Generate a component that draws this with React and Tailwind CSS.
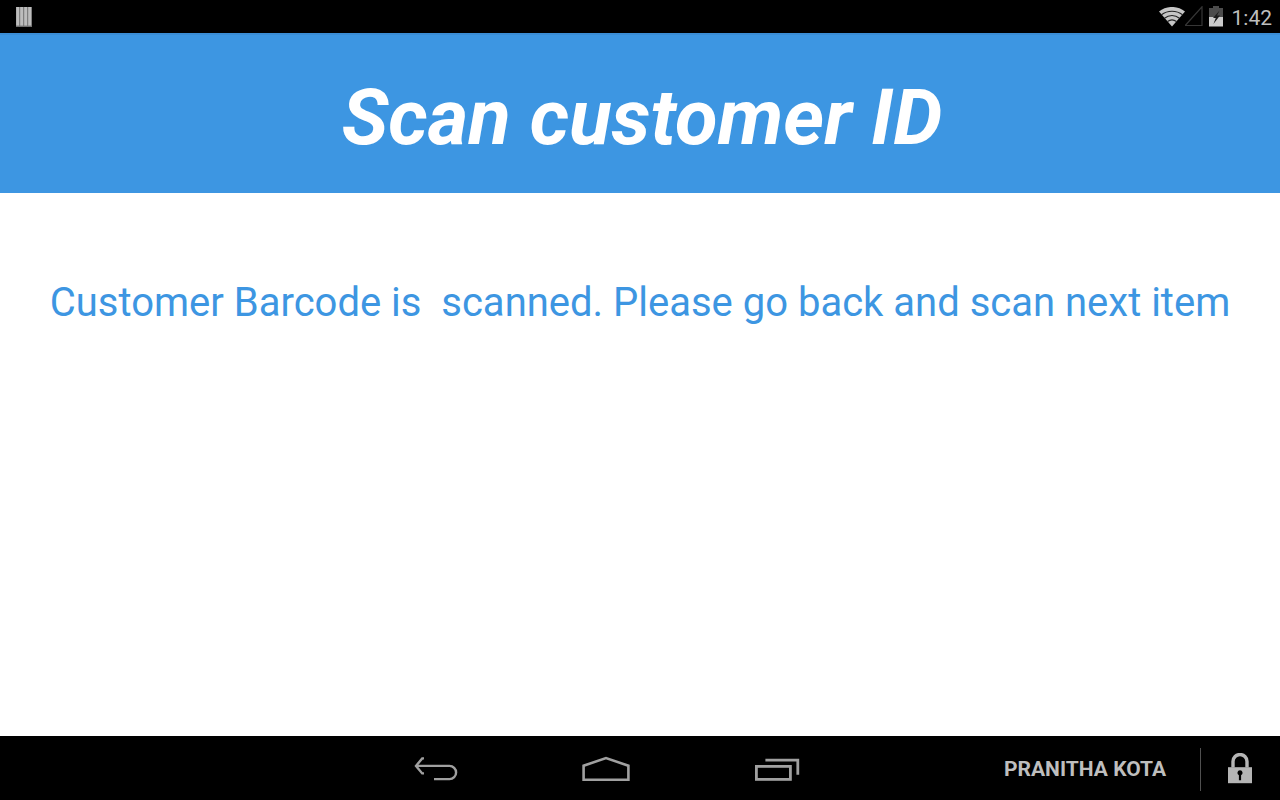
function NotificationIcon() {
  return (
    <svg width="18" height="22" viewBox="0 0 18 22" aria-hidden="true">
      <rect x="1" y="1" width="16" height="20" fill="#707070" />
      <g fill="#bdbdbd">
        <rect x="1.2" y="1" width="3" height="18.6" />
        <rect x="5.2" y="1" width="3" height="18.6" />
        <rect x="9.2" y="1" width="3" height="18.6" />
        <rect x="13.2" y="1" width="3" height="18.6" />
      </g>
    </svg>
  );
}

function WifiIcon() {
  return (
    <svg width="26" height="20" viewBox="0 0 26 20" aria-hidden="true">
      <path d="M0 4.6C7.5-1.6 18.5-1.6 26 4.6L13 19.4Z" fill="#c6c6c6" />
      <g fill="none" stroke="#222" strokeWidth="1.1">
        <path d="M2.5 7.8C8.5 3 17.5 3 23.5 7.8" />
        <path d="M5.5 11.2C10 7.6 16 7.6 20.5 11.2" />
        <path d="M8.5 14.5C11.3 12.4 14.7 12.4 17.5 14.5" />
      </g>
    </svg>
  );
}

function SignalIcon() {
  return (
    <svg width="19" height="22" viewBox="0 0 19 22" aria-hidden="true">
      <path d="M.2 19.5H17V.8Z" fill="none" stroke="#363636" strokeWidth="1.2" />
    </svg>
  );
}

function BatteryIcon() {
  return (
    <svg width="14" height="21" viewBox="0 0 14 21" aria-hidden="true">
      <path d="M0 2H4V0H10V2H14V12H0Z" fill="#4c4c4c" />
      <rect y="11" width="14" height="9.5" fill="#cbcbcb" />
      <path d="M10.6 4.6L4 12H6.8L4.4 18L11 9.6H8L10.6 4.6Z" fill="#1c1c1c" />
    </svg>
  );
}

function BackIcon() {
  return (
    <svg width="44" height="26" viewBox="0 0 44 26" fill="none" stroke="#a0a0a0" strokeWidth="2.4" aria-hidden="true">
      <path d="M2 9.9H35.5A6.6 6.6 0 0 1 35.5 23.1H20" />
      <path d="M10 2.4H8.2L2 9.9L8.2 17.4H10" />
    </svg>
  );
}

function HomeIcon() {
  return (
    <svg width="48" height="26" viewBox="0 0 48 26" fill="none" stroke="#a0a0a0" strokeWidth="2.6" aria-hidden="true">
      <path d="M1.6 23.7V9.7L24 2L46.4 9.7V23.7Z" />
    </svg>
  );
}

function RecentsIcon() {
  return (
    <svg width="46" height="24" viewBox="0 0 46 24" fill="none" stroke="#a0a0a0" strokeWidth="2.8" aria-hidden="true">
      <rect x="2.4" y="9.4" width="34" height="13" />
      <path d="M11.4 3.2H43.8V17.8" />
    </svg>
  );
}

function LockIcon() {
  return (
    <svg width="24" height="32" viewBox="0 0 24 32" aria-hidden="true">
      <path d="M5 14.4V8.5A7 7 0 0 1 19 8.5V14.4" fill="none" stroke="#b5b5b5" strokeWidth="3.4" />
      <rect y="14.2" width="24" height="16" fill="#b5b5b5" />
      <path d="M12 17.2A2.7 2.7 0 0 0 10.9 22.3V27.2H13.1V22.3A2.7 2.7 0 0 0 12 17.2Z" fill="#000" />
    </svg>
  );
}

export default function App() {
  return (
    <div className="flex min-h-screen flex-col bg-white font-['Roboto',sans-serif]">
      <div className="flex h-[33px] items-center justify-between bg-black pl-[15px] pr-2">
        <NotificationIcon />
        <div className="flex items-center">
          <WifiIcon />
          <SignalIcon />
          <div className="ml-[5px]">
            <BatteryIcon />
          </div>
          <time className="ml-[9px] pt-0.5 text-[21px] leading-8 text-[#bebebe]">1:42</time>
        </div>
      </div>

      <header className="flex h-40 items-center justify-center border-t-2 border-[#3a8dd6] bg-[#3d96e2] pl-1 pt-2 text-white">
        <h1 className="text-[78px] font-bold italic leading-[94px]">Scan customer ID</h1>
      </header>

      <main className="flex-1 px-8 pt-[82px]">
        <p className="whitespace-pre-wrap text-center text-[40px] leading-[56px] text-[#3d96e2]">
          {"Customer Barcode is  scanned. Please go back and scan next item"}
        </p>
      </main>

      <nav className="grid h-16 grid-cols-[1fr_auto_1fr] items-center bg-black pt-0.5">
        <span />
        <div className="flex items-center gap-[124px] pr-[66px]">
          <button type="button" aria-label="Back"><BackIcon /></button>
          <button type="button" aria-label="Home"><HomeIcon /></button>
          <button type="button" aria-label="Recent apps"><RecentsIcon /></button>
        </div>
        <div className="flex items-center justify-end pr-7">
          <span className="text-[21px] font-bold leading-8 text-[#bebebe]">PRANITHA KOTA</span>
          <span className="ml-[34px] mr-[27px] h-[43px] w-px bg-[#505050]" />
          <button type="button" aria-label="Lock"><LockIcon /></button>
        </div>
      </nav>
    </div>
  );
}
